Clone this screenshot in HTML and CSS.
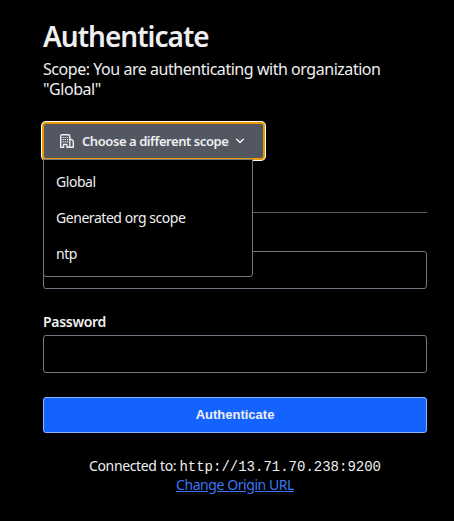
FILE: index.html
```html
<!DOCTYPE html>
<html lang="en">
<head>
<meta charset="utf-8">
<title>Authenticate</title>
<link rel="stylesheet" href="styles.css">
</head>
<body>
<main class="auth">
  <h1 class="title">Authenticate</h1>
  <p class="scope">Scope: You are authenticating with organization "Global"</p>
  <div class="dropdown">
    <button class="toggle" type="button">
      <svg class="org" viewBox="0 0 16 16" width="16" height="16" fill="none" stroke="currentColor" stroke-width="1.4" stroke-linejoin="round" stroke-linecap="round"><path d="M1.7 14.3V3Q1.7 1.7 3 1.7H9.5Q10.8 1.7 10.8 3V14.3H14.3V8.2L12.6 6.4H11M1.7 14.3H4.6V11.4H7.9V14.3H10.8"/><path stroke-linecap="butt" stroke-width="1.2" d="M3.5 4.5H4.7M5.7 4.5H6.9M7.9 4.5H9.1M3.5 6.7H4.7M5.7 6.7H6.9M7.9 6.7H9.1M3.5 8.9H4.7M5.7 8.9H6.9M7.9 8.9H9.1"/></svg>
      <span>Choose a different scope</span>
      <svg class="chevron" viewBox="0 0 16 16" width="16" height="16" fill="none" stroke="currentColor" stroke-width="1.5" stroke-linecap="round" stroke-linejoin="round"><path d="M4.7 6.3 8 9.5l3.3-3.2"/></svg>
    </button>
    <ul class="menu">
      <li>Global</li>
      <li>Generated org scope</li>
      <li>ntp</li>
    </ul>
  </div>
  <form class="form">
    <input id="login" type="text">
    <label class="password-label" for="password">Password</label>
    <input id="password" type="password">
    <button class="submit" type="button">Authenticate</button>
  </form>
  <footer class="origin">
    <div class="address"><span>Connected to:</span> <code>http://13.71.70.238:9200</code></div>
    <a href="#">Change Origin URL</a>
  </footer>
</main>
</body>
</html>
```
FILE: styles.css
```css
* { box-sizing: border-box; }
body { margin: 0; background: #000; color: #efeff1; font: 14px/20px "Noto Sans", sans-serif; }
.auth { width: 384px; margin-left: 43px; padding-top: 18px; }
.title { margin: 0; font-size: 28px; line-height: 36px; font-weight: 600; letter-spacing: -1px; }
.scope { margin: 5px 0 0; font-size: 16px; line-height: 20px; letter-spacing: -0.46px; }
.dropdown { position: relative; margin-top: 24px; height: 36px; }
.toggle { display: flex; align-items: center; width: 221px; height: 36px; padding: 0 15px; border: 1px solid #eb9b00; border-radius: 3px; background: #535761; color: #efeff1; font: 600 13px/20px "Noto Sans", sans-serif; letter-spacing: -0.43px; box-shadow: 0 0 0 1px #eb9b00, 0 0 0 2px #fff; }
.org { margin-right: 7px; }
.chevron { margin-left: 4px; }
.toggle svg, .toggle span { flex: none; }
.menu { position: absolute; top: 36px; left: 0; width: 210px; height: 118px; margin: 0; padding: 4px 12px; list-style: none; background: #000; border: 1px solid #727985; border-radius: 0 0 3px 3px; letter-spacing: -0.45px; }
.menu li { height: 36px; line-height: 36px; }
.form { display: flex; flex-direction: column; margin-top: 53px; padding-top: 35px; border-top: 1px solid #565c66; }
label { font-size: 14px; font-weight: 600; line-height: 20px; letter-spacing: -0.3px; }
input { height: 38px; margin: 3px 0 0; background: #000; border: 1px solid #727985; border-radius: 3px; }
.password-label { margin-top: 23px; }
.submit { height: 36px; margin-top: 24px; padding: 0 0 2px; border: 1px solid #8bb1ff; border-radius: 3px; background: #1563ff; color: #efeff1; font: 700 13px "Liberation Sans", sans-serif; }
.origin { margin-top: 23px; text-align: center; line-height: 19px; letter-spacing: -0.43px; }
.address { height: 19px; }
.address span { letter-spacing: -0.35px; }
.origin code { font: 14px/19px "Liberation Mono", monospace; letter-spacing: 0; }
.origin a { color: #3a76f5; }
```
